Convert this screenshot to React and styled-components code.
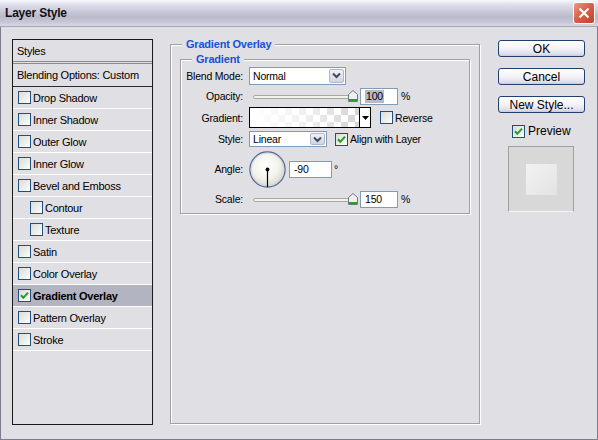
import React from "react";
import styled, { createGlobalStyle } from "styled-components";

const GlobalStyle = createGlobalStyle`
  html, body {
    margin: 0;
    padding: 0;
    background: #e0dfe3;
  }
  body {
    font-family: "Liberation Sans", Arial, sans-serif;
    color: #000;
  }
  * {
    box-sizing: border-box;
  }
`;

const Window = styled.div`
  width: 598px;
  height: 440px;
  display: flex;
  flex-direction: column;
  background: #e0dfe3;
  overflow: hidden;
`;

const TitleBar = styled.div`
  height: 27px;
  flex: none;
  display: flex;
  align-items: center;
  justify-content: space-between;
  padding: 0 3px 0 5px;
  background: linear-gradient(
    #f8f8fb 0%,
    #e2e2ee 15%,
    #c8c8d8 45%,
    #babacc 65%,
    #c6c6d6 85%,
    #dadae6 100%
  );
  border-bottom: 1px solid #a4a4b4;
`;

const Title = styled.span`
  font-size: 12px;
  font-weight: 700;
  letter-spacing: -0.2px;
  color: #111;
`;

const CloseBtn = styled.div`
  width: 22px;
  height: 22px;
  border: 1px solid #fff;
  border-radius: 3px;
  background: linear-gradient(135deg, #eb9a88 0%, #d9604a 45%, #c2412c 100%);
  display: flex;
  align-items: center;
  justify-content: center;
`;

const Body = styled.div`
  flex: 1;
  display: flex;
  align-items: flex-start;
  padding: 12px 0 0 11px;
  border-left: 1px solid #7c7c8c;
  border-right: 1px solid #7c7c8c;
  border-bottom: 1px solid #7c7c8c;
`;

/* ---------- left style list ---------- */

const StyleList = styled.div`
  width: 141px;
  height: 386px;
  flex: none;
  border: 1px solid #1a1a1a;
`;

const sepBorder = {
  double: "3px double #8a8a8a",
  dark: "1px solid #2a2a2a",
  light: "1px solid #fff",
};

const ListRow = styled.div`
  height: ${(p) => p.$h || 22}px;
  display: flex;
  align-items: center;
  gap: 2px;
  padding-left: ${(p) => (p.$indent ? 17 : p.$plain ? 4 : 5)}px;
  font-size: 11px;
  letter-spacing: -0.25px;
  font-weight: ${(p) => (p.$selected ? 700 : 400)};
  background: ${(p) => (p.$selected ? "#b3b4c2" : "transparent")};
  border-bottom: ${(p) => sepBorder[p.$sep || "light"]};
`;

/* ---------- checkbox ---------- */

const Box = styled.span`
  width: 13px;
  height: 13px;
  flex: none;
  border: 1px solid #1c5180;
  background: linear-gradient(135deg, #dcdcd7 0%, #efefeb 60%, #fff 100%);
  display: flex;
  align-items: center;
  justify-content: center;
  margin-left: ${(p) => p.$ml || 0}px;
`;

const CheckBox = ({ checked, ml }) => (
  <Box $ml={ml}>
    {checked && (
      <svg width="11" height="11" viewBox="0 0 11 11">
        <path
          d="M2 5.3 L4.3 7.8 L9 2.6"
          fill="none"
          stroke="#21a121"
          strokeWidth="2"
        />
      </svg>
    )}
  </Box>
);

/* ---------- group boxes ---------- */

const Group = styled.div`
  position: relative;
  flex: none;
  border: 1px solid #a0a0a0;
  box-shadow: 1px 1px 0 #fff, inset 1px 1px 0 #fff;
`;

const OuterGroup = styled(Group)`
  width: 310px;
  height: 380px;
  margin: 5px 0 0 17px;
  padding: 14px 9px 0 9px;
`;

const InnerGroup = styled(Group)`
  width: 290px;
  height: 155px;
  padding: 6px 0 0 0;
`;

const GroupTitle = styled.span`
  position: absolute;
  top: -7px;
  left: 11px;
  padding: 0 4px;
  line-height: 13px;
  background: #e0dfe3;
  color: #1b4fd8;
  font-size: 11px;
  letter-spacing: -0.2px;
  font-weight: 700;
`;

/* ---------- form rows ---------- */

const FormRow = styled.div`
  height: ${(p) => p.$h}px;
  display: flex;
  align-items: center;
  font-size: 10.5px;
  letter-spacing: -0.2px;
`;

const Label = styled.span`
  width: 62px;
  margin-right: 6px;
  flex: none;
  text-align: right;
`;

const SelectBox = styled.div`
  width: ${(p) => p.$w}px;
  height: ${(p) => p.$h}px;
  flex: none;
  border: 1px solid #7f9db9;
  background: #fff;
  display: flex;
  align-items: center;
  justify-content: space-between;
  padding: 1px 1px 1px 3px;
`;

const DropBtn = styled.span`
  width: 15px;
  height: 100%;
  border: 1px solid #b4b6c8;
  border-radius: 2px;
  background: linear-gradient(#f0f0f6, #d4d4e0);
  display: flex;
  align-items: center;
  justify-content: center;
`;

const Select = ({ w, h, value }) => (
  <SelectBox $w={w} $h={h}>
    <span>{value}</span>
    <DropBtn>
      <svg width="9" height="7" viewBox="0 0 9 7">
        <path
          d="M1 1.5 L4.5 5 L8 1.5"
          fill="none"
          stroke="#3c4a6a"
          strokeWidth="2"
        />
      </svg>
    </DropBtn>
  </SelectBox>
);

const SliderWrap = styled.div`
  position: relative;
  width: 104px;
  height: 12px;
  flex: none;
  margin-left: 4px;
`;

const Track = styled.div`
  position: absolute;
  left: 0;
  right: 4px;
  top: 5px;
  height: 4px;
  border: 1px solid #aaa99f;
  border-radius: 2px;
  background: #f3f2ea;
`;

const Thumb = styled.svg`
  position: absolute;
  top: 0;
`;

const Slider = ({ pos }) => (
  <SliderWrap>
    <Track />
    <Thumb width="10" height="12" viewBox="0 0 10 12" style={{ left: pos }}>
      <path
        d="M0.5 4.5 L5 0.5 L9.5 4.5 V11.5 H0.5 Z"
        fill="#eef0ee"
        stroke="#6b7888"
      />
      <rect x="1" y="9" width="8" height="2" fill="#25a025" />
    </Thumb>
  </SliderWrap>
);

const NumField = styled.div`
  width: ${(p) => p.$w}px;
  height: 17px;
  flex: none;
  margin-left: ${(p) => p.$ml}px;
  border: 1px solid #7f9db9;
  background: #fff;
  display: flex;
  align-items: center;
  padding-left: 4px;
`;

const Selected = styled.span`
  background: #b9b9c6;
  padding: 0 1px;
  line-height: 13px;
`;

const Unit = styled.span`
  margin-left: ${(p) => p.$ml || 3}px;
`;

const Swatch = styled.div`
  width: 122px;
  height: 21px;
  flex: none;
  border: 1px solid #000;
  display: flex;
`;

const SwatchFill = styled.div`
  flex: 1;
  background: linear-gradient(
      to right,
      #fff 4%,
      rgba(255, 255, 255, 0.6) 55%,
      rgba(255, 255, 255, 0) 96%
    ),
    repeating-conic-gradient(#d6d6d6 0% 25%, #fff 0% 50%) 0 0 / 14px 14px;
`;

const SwatchArrow = styled.div`
  width: 11px;
  border-left: 1px solid #000;
  background: #fff;
  display: flex;
  align-items: center;
  justify-content: center;
`;

const CheckLabel = styled.span`
  margin-left: ${(p) => p.$ml || 3}px;
`;

const Dial = () => (
  <svg width="37" height="37" viewBox="0 0 37 37">
    <defs>
      <radialGradient id="dialFill" cx="45%" cy="40%" r="60%">
        <stop offset="0%" stopColor="#ffffff" />
        <stop offset="60%" stopColor="#f3f3ec" />
        <stop offset="100%" stopColor="#d8d8d0" />
      </radialGradient>
    </defs>
    <circle cx="18.5" cy="18.5" r="17.6" fill="url(#dialFill)" stroke="#53668e" strokeWidth="1.2" />
    <circle cx="18.5" cy="18.5" r="16.4" fill="none" stroke="#c9cfdf" strokeWidth="0.8" />
    <line x1="18.5" y1="18.5" x2="18.5" y2="36" stroke="#000" strokeWidth="1.2" />
    <circle cx="18.5" cy="18.5" r="1.9" fill="#000" />
  </svg>
);

/* ---------- right column ---------- */

const ButtonCol = styled.div`
  width: 87px;
  flex: none;
  margin: 1px 0 0 18px;
  display: flex;
  flex-direction: column;
`;

const Btn = styled.button`
  width: 87px;
  height: 17px;
  margin-bottom: 11px;
  padding: 0;
  border: 1px solid #21406e;
  border-radius: 3px;
  background: linear-gradient(#ffffff 0%, #f5f5f9 45%, #e0e0ec 85%, #c9c9da 100%);
  font: 12px "Liberation Sans", Arial, sans-serif;
  color: #000;
  display: flex;
  align-items: center;
  justify-content: center;
`;

const PreviewRow = styled.div`
  display: flex;
  align-items: center;
  padding-left: 14px;
  font-size: 12px;
`;

const PreviewBox = styled.div`
  width: 66px;
  height: 66px;
  margin: 8px 0 0 10px;
  border: 1px solid #a0a0a0;
  border-bottom-color: #f6f6f6;
  background: #d8d8d8;
  display: flex;
  align-items: center;
  justify-content: center;
`;

const PreviewInner = styled.div`
  width: 31px;
  height: 31px;
  background: linear-gradient(135deg, #f2f2f2, #e3e3e3);
`;

const styleItems = [
  { name: "Drop Shadow" },
  { name: "Inner Shadow" },
  { name: "Outer Glow" },
  { name: "Inner Glow" },
  { name: "Bevel and Emboss" },
  { name: "Contour", indent: true },
  { name: "Texture", indent: true },
  { name: "Satin" },
  { name: "Color Overlay" },
  { name: "Gradient Overlay", checked: true, selected: true },
  { name: "Pattern Overlay" },
  { name: "Stroke" },
];

const App = () => {
  return (
    <Window>
      <GlobalStyle />
      <TitleBar>
        <Title>Layer Style</Title>
        <CloseBtn>
          <svg width="14" height="14" viewBox="0 0 14 14">
            <path d="M2.5 2.5 L11.5 11.5 M11.5 2.5 L2.5 11.5" stroke="#fff" strokeWidth="2.2" />
          </svg>
        </CloseBtn>
      </TitleBar>

      <Body>
        <StyleList>
          <ListRow $plain $h={24} $sep="double">
            Styles
          </ListRow>
          <ListRow $plain $h={23} $sep="dark">
            Blending Options: Custom
          </ListRow>
          {styleItems.map((it) => (
            <ListRow key={it.name} $indent={it.indent} $selected={it.selected}>
              <CheckBox checked={it.checked} />
              {it.name}
            </ListRow>
          ))}
        </StyleList>

        <OuterGroup>
          <GroupTitle>Gradient Overlay</GroupTitle>
          <InnerGroup>
            <GroupTitle>Gradient</GroupTitle>

            <FormRow $h={19}>
              <Label>Blend Mode:</Label>
              <Select w={97} h={18} value="Normal" />
            </FormRow>

            <FormRow $h={22}>
              <Label>Opacity:</Label>
              <Slider pos={95} />
              <NumField $w={38} $ml={3}>
                <Selected>100</Selected>
              </NumField>
              <Unit>%</Unit>
            </FormRow>

            <FormRow $h={21}>
              <Label>Gradient:</Label>
              <Swatch>
                <SwatchFill />
                <SwatchArrow>
                  <svg width="7" height="4" viewBox="0 0 7 4">
                    <path d="M0 0 H7 L3.5 4 Z" fill="#000" />
                  </svg>
                </SwatchArrow>
              </Swatch>
              <CheckBox ml={9} />
              <CheckLabel $ml={2}>Reverse</CheckLabel>
            </FormRow>

            <FormRow $h={22}>
              <Label>Style:</Label>
              <Select w={78} h={16} value="Linear" />
              <CheckBox checked ml={8} />
              <CheckLabel $ml={2}>Align with Layer</CheckLabel>
            </FormRow>

            <FormRow $h={38}>
              <Label>Angle:</Label>
              <Dial />
              <NumField $w={43} $ml={3}>
                -90
              </NumField>
              <Unit $ml={2}>°</Unit>
            </FormRow>

            <FormRow $h={22}>
              <Label>Scale:</Label>
              <Slider pos={95} />
              <NumField $w={38} $ml={3}>
                150
              </NumField>
              <Unit>%</Unit>
            </FormRow>
          </InnerGroup>
        </OuterGroup>

        <ButtonCol>
          <Btn>OK</Btn>
          <Btn>Cancel</Btn>
          <Btn>New Style...</Btn>
          <PreviewRow>
            <CheckBox checked />
            <CheckLabel $ml={3}>Preview</CheckLabel>
          </PreviewRow>
          <PreviewBox>
            <PreviewInner />
          </PreviewBox>
        </ButtonCol>
      </Body>
    </Window>
  );
};

export default App;
